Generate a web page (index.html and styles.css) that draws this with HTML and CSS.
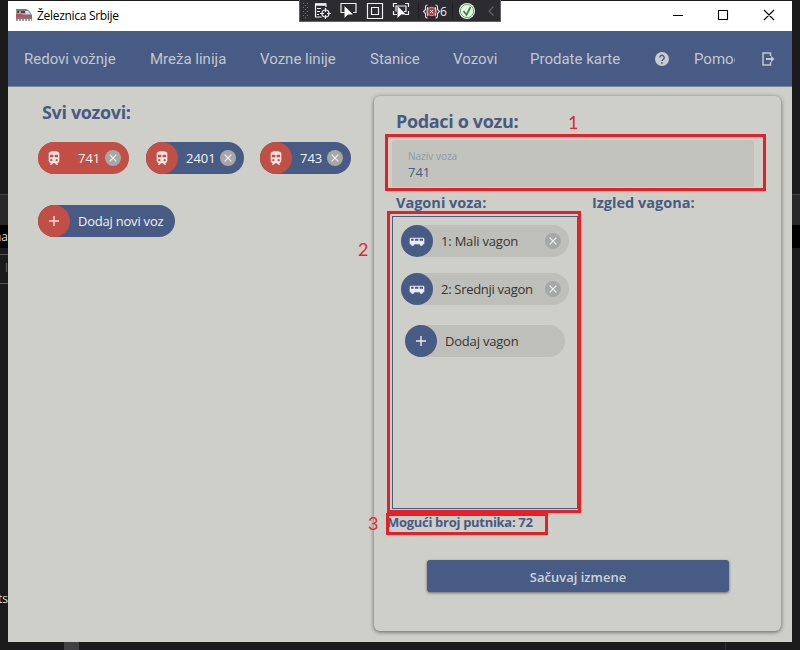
FILE: index.html
```html
<!DOCTYPE html>
<html lang="sr-Latn">
<head>
<meta charset="utf-8">
<title>Železnica Srbije</title>
<link rel="stylesheet" href="styles.css">
</head>
<body>
<svg width="0" height="0" class="defs">
  <symbol id="train" viewBox="0 0 24 24"><path fill-rule="evenodd" d="M12 2C8 2 4 2.500 4 6v10c0 1.800 1.500 3.500 3.500 3.500L6 21v1h2.500l2-2h3l2 2H18v-1l-1.500-1.500c2 0 3.500-1.700 3.500-3.500V6c0-3.500-4-4-8-4zM6 7h5v4H6zm7 0h5v4h-5zM8 13.500a1.700 1.700 0 1 1 0 3.400 1.700 1.700 0 0 1 0-3.400zm8 0a1.700 1.700 0 1 1 0 3.400 1.700 1.700 0 0 1 0-3.400z"/></symbol>
  <symbol id="van" viewBox="0 0 24 24"><path fill-rule="evenodd" d="M3 7h18q2 0 2 2v8h-2a2.500 2.500 0 0 1-5 0H8a2.500 2.500 0 0 1-5 0H1V9q0-2 2-2zm0 1.800V11.500h4V8.800zm6 0V11.500h5V8.800zm7 0V11.500h5V8.800z"/></symbol>
  <symbol id="plus" viewBox="0 0 12 12"><path d="M6 1v10M1 6h10" fill="none" stroke="currentColor" stroke-width="1.400"/></symbol>
  <symbol id="cross" viewBox="0 0 16 16"><circle cx="8" cy="8" r="8" fill="#a6a8a8"/><path d="M4.700 4.700l6.600 6.600M11.300 4.700l-6.600 6.600" fill="none" stroke="#f0f0ef" stroke-width="1.200"/></symbol>
</svg>

<div class="backdrop">
  <i class="band"></i><i class="strip"></i><i class="rule r1"></i><i class="rule r2"></i>
  <i class="band right"></i><i class="strip right"></i><i class="foot"></i><i class="foot-right"></i>
  <span class="bg-na">na</span><span class="bg-i">I</span><span class="bg-nts">nts</span>
</div>

<main class="window">
  <header class="titlebar">
    <svg class="app-icon" viewBox="0 0 16 13"><path d="M0 1h10q4 1 6 6v4H0z" fill="#9aa5ac"/><path d="M0 1h9l4 2H1z" fill="#777"/><path d="M1 3h2v2H1zm4 0h4v2H5z" fill="#5d3d45"/><path d="M0 6h5l3 1h8v2H0z" fill="#b5525a"/><path d="M9 3h3l2 3h-4z" fill="#d8dfe4"/><path d="M0 10h16" stroke="#574a50"/><path d="M0 12h16" stroke="#333" stroke-dasharray="2 1"/></svg>
    <span class="title">Železnica Srbije</span>
    <svg class="controls" viewBox="0 0 104 12"><path d="M1 6.500h10M46.500 1.500h9v9h-9zM92 1l10 10M102 1L92 11" fill="none" stroke="#000" stroke-width="1.100"/></svg>
  </header>
  <nav class="menu">
    <span class="m1">Redovi vožnje</span><span class="m2">Mreža linija</span><span class="m3">Vozne linije</span><span class="m4">Stanice</span><span class="m5">Vozovi</span><span class="m6">Prodate karte</span>
    <svg class="help" viewBox="0 0 14 14"><circle cx="7" cy="7" r="7" fill="#c9ccce"/><path d="M4.800 5.500a2.200 2.200 0 1 1 3.600 1.700Q7 8.200 7 9" fill="none" stroke="#475b84" stroke-width="1.400"/><path d="M6.200 10.200h1.500v1.500H6.200z" fill="#475b84"/></svg>
    <span class="m7">Pomoć</span>
    <svg class="logout" viewBox="0 0 13 14"><path d="M8.500 4V1H1v12h7.500v-3" fill="none" stroke="#c3c8cd" stroke-width="1.500"/><path d="M4 6h5V3.800L12.500 7 9 10.200V8H4z" fill="#c3c8cd"/></svg>
  </nav>

  <div class="content">
    <section class="trains">
      <h1>Svi vozovi:</h1>
      <div class="chips">
        <div class="chip red w91"><b><svg><use href="#train"/></svg></b><span>741</span><svg class="x"><use href="#cross"/></svg></div>
        <div class="chip w98"><b><svg><use href="#train"/></svg></b><span>2401</span><svg class="x"><use href="#cross"/></svg></div>
        <div class="chip w91"><b><svg><use href="#train"/></svg></b><span>743</span><svg class="x"><use href="#cross"/></svg></div>
      </div>
      <div class="chip add"><b><svg class="p"><use href="#plus"/></svg></b><span class="t-add">Dodaj novi voz</span></div>
    </section>

    <section class="card">
      <h1>Podaci o vozu:</h1>
      <div class="field"><label>Naziv voza</label><span>741</span></div>
      <div class="heads"><h2 class="hv">Vagoni voza:</h2><h2 class="hi">Izgled vagona:</h2></div>
      <div class="list">
        <div class="chip wagon"><b><svg><use href="#van"/></svg></b><span class="t-mali">1: Mali vagon</span><svg class="x"><use href="#cross"/></svg></div>
        <div class="chip wagon"><b><svg><use href="#van"/></svg></b><span class="t-sred">2: Srednji vagon</span><svg class="x"><use href="#cross"/></svg></div>
        <div class="chip wagon addw"><b><svg class="p"><use href="#plus"/></svg></b><span class="t-dod">Dodaj vagon</span></div>
      </div>
      <p class="total">Mogući broj putnika: 72</p>
      <button>Sačuvaj izmene</button>
    </section>
  </div>
</main>

<svg class="debugbar" viewBox="0 0 202 22">
  <rect x=".5" y="-.5" width="201" height="22" fill="#2b2b30" stroke="#626266"/>
  <g stroke="#77777b" stroke-dasharray="1 3"><path d="M4.500 3v16M8.500 3v16"/><path d="M6.500 5v14"/></g>
  <g fill="none" stroke="#f0f0f0" stroke-width="1.200">
    <path d="M16 4h11v3M16.500 4v13h6M18 8.500h4M18 11.500h3M18 14.500h2" /><path d="M16 4.500h11" stroke-width="2.500"/>
    <circle cx="26.500" cy="13.500" r="3.500"/><path d="M26.500 8v4M26.500 15v4M21 13.500h4M28 13.500h4"/>
    <path d="M47 12.500h-5v-9h15v9h-3"/><path d="M68.500 3.500h15v15h-15zM72.500 7.500h7v7h-7z"/>
    <path d="M94.500 7V3.500H98M106 3.500h3.500V7M94.500 11v3.500H98M106 14.500h3.500V11M97 11.500V6h10v5.500h-2"/>
  </g>
  <path d="M45.500 6v12l3.500-3.500h5zM98.500 6v12l3.500-3.500h5z" fill="#fff"/>
  <path d="M119.500 3v16M153.500 3v16" stroke="#1f1f22"/>
  <path d="M128.500 5q-2 0-2 2v2.500l-2 2 2 2V16q0 2 2 2M136.500 5q2 0 2 2v2.500l2 2-2 2V16q0 2-2 2M129 7q-2 4.500 0 9M136 7q2 4.500 0 9" fill="none" stroke="#e4dede" stroke-width="1.100"/>
  <circle cx="132.500" cy="11.500" r="4.200" fill="#d92f34" stroke="#e9caca" stroke-width=".7"/><path d="M131 10l3 3M134 10l-3 3" stroke="#fff"/>
  <text x="141" y="16" class="dbg-num">6</text>
  <circle cx="168" cy="11" r="8" fill="#e9f4e9"/><circle cx="168" cy="11" r="6.600" fill="none" stroke="#69ad6b"/><path d="M164.500 11l3 4 4-8" fill="none" stroke="#2f9136" stroke-width="1.700"/>
  <path d="M194.500 6.500L190 11l4.500 4.500" fill="none" stroke="#66666a" stroke-width="1.200"/>
</svg>

<div class="marks">
  <i class="box b1"></i><i class="box b2"></i><i class="box b3"></i>
  <span class="n1">1</span><span class="n2">2</span><span class="n3">3</span>
</div>
</body>
</html>
```
FILE: styles.css
```css
* { box-sizing: border-box; }
body { margin: 0; width: 800px; height: 650px; overflow: hidden; background: #1b1b1b; font-family: "Open Sans", "Noto Sans", sans-serif; position: relative; display: flow-root; }
h1, h2, p { margin: 0; white-space: nowrap; }
.defs { position: absolute; }

.backdrop i, .backdrop span { position: absolute; }
.band { left: 0; top: 194px; width: 8px; height: 31px; background: #292929; border-top: 1px solid #414141; }
.strip { left: 0; top: 225px; width: 8px; height: 23px; background: #000; }
.band.right, .strip.right { left: 792px; }
.rule { left: 0; width: 8px; height: 1px; background: #555; }
.r1 { top: 254px; }
.r2 { top: 283px; }
.foot { left: 64px; top: 642px; width: 15px; height: 8px; background: #414143; }
.foot-right { left: 725px; top: 642px; width: 1px; height: 8px; background: #303030; }
.backdrop span { color: #ddd; font-size: 12px; line-height: 16px; width: 8px; overflow: hidden; direction: rtl; white-space: nowrap; left: 0; }
.backdrop .bg-na { top: 229px; }
.backdrop .bg-i { top: 260px; color: #666; }
.backdrop .bg-nts { top: 591px; }

.window { position: relative; margin: 1px 0 0 8px; width: 784px; height: 641px; background: #cecfc9; display: flow-root; }
.titlebar { height: 30px; background: #fff; display: flex; align-items: center; padding: 0 16px 0 8px; }
.app-icon { width: 16px; height: 13px; margin-bottom: 3px; }
.title { margin-left: 5px; font-size: 12px; line-height: 16px; letter-spacing: -.3px; color: #000; flex: 1; margin-bottom: 1px; }
.controls { width: 104px; height: 12px; margin-bottom: 2px; }

.menu { height: 56px; background: #475b84; border-bottom: 1px solid #7b8799; display: flex; align-items: center; padding-left: 16px; font: 15px/20px Roboto, sans-serif; color: #c3c8cd; white-space: nowrap; }
.menu span { flex: none; margin-right: 34px; }
.m1 { width: 92px; } .m2 { width: 76px; } .m3 { width: 76px; } .m4 { width: 49px; } .m5 { width: 43px; } .m6 { width: 91px; }
.menu .m7 { width: 41px; overflow: hidden; margin: 0 27px 0 25px; }
.help { width: 14px; height: 14px; flex: none; }
.logout { width: 13px; height: 14px; flex: none; }

.content { display: flex; height: 555px; }
.trains { width: 366px; padding: 13px 0 0 30px; }
h1 { font-size: 18px; line-height: 24px; font-weight: 700; color: #475b84; letter-spacing: -.35px; }
.trains h1 { margin-left: 4px; }
.chips { display: flex; margin: 18px 0 31px; }
.chips .chip:nth-child(1) { margin-right: 17px; }
.chips .chip:nth-child(2) { margin-right: 16px; }
.chip { height: 32px; border-radius: 16px; background: #475b84; color: #f1f3f5; display: flex; align-items: center; font-size: 13px; line-height: 20px; white-space: nowrap; }
.chip b { width: 32px; height: 32px; border-radius: 50%; background: #c24f46; display: grid; place-items: center; flex: none; margin-right: 8px; }
.chip b svg { width: 16px; height: 16px; fill: #f7e5e3; color: #f3dedc; }
.chip b svg.p { width: 12px; height: 12px; }
.chip span { flex: 1; }
.chip .t-add { letter-spacing: -.22px; }
.t-mali, .t-dod { letter-spacing: -.2px; }
.t-sred { letter-spacing: -.3px; }
.x { width: 16px; height: 16px; flex: none; margin-right: 8px; }
.w91 { width: 91px; }
.w98 { width: 98px; }
.chip.red { background: #c24f46; }
.add { width: 137px; }

.card { width: 407px; height: 535px; margin-top: 9px; border-radius: 6px; background: #cecfc9; box-shadow: 0 1px 4px rgba(0,0,0,.55); padding: 13px 0 0 13px; }
.card h1 { margin-left: 9px; }
.field { margin: 7px 0 0 5px; width: 362px; height: 47px; border-radius: 4px 4px 0 0; background: #c2c3bd; padding: 9px 0 0 16px; display: flex; flex-direction: column; }
.field label { font-size: 10px; line-height: 14px; color: #8d98a3; }
.field span { font-size: 13px; line-height: 19px; color: #475b84; }
.heads { display: flex; padding: 6px 0 0 9px; }
h2 { font-size: 14.500px; line-height: 20px; color: #475b84; letter-spacing: 0; }
.hv { width: 196px; }
.list { margin: 3px 0 0 5px; width: 186px; height: 293px; border: 1px solid #475b84; padding: 8px 0 0 8px; }
.wagon { background: #bebfb8; color: #343533; width: 168px; margin-bottom: 16px; }
.wagon b { background: #475b84; }
.wagon b svg { fill: #e9edf4; color: #e9edf4; }
.addw { width: 160px; margin: 20px 0 0 4px; }
.total { font-size: 13px; line-height: 20px; font-weight: 700; color: #475b84; margin-top: 3px; letter-spacing: -.3px; }
button { display: block; margin: 28px 0 0 40px; width: 302px; height: 32px; border: 0; border-radius: 3px; background: #475b84; box-shadow: 0 1px 3px rgba(0,0,0,.5); color: #ced3d8; font: 600 13px/20px "Open Sans", sans-serif; padding: 2px 0 0; }

.debugbar { position: absolute; left: 299px; top: 0; width: 202px; height: 22px; }
.dbg-num { fill: #eee; font: 12px "Open Sans", sans-serif; }
.marks i, .marks span { position: absolute; }
.box { border: 3px solid #e32128; }
.b1 { left: 385px; top: 134px; width: 381px; height: 57px; }
.b2 { left: 387px; top: 211px; width: 194px; height: 302px; }
.b3 { left: 386px; top: 513px; width: 162px; height: 22px; }
.marks span { color: #dc2a30; font: 18px/24px Lato, sans-serif; }
.n1 { left: 568px; top: 110px; }
.n2 { left: 358px; top: 237px; }
.n3 { left: 368px; top: 511px; }
```
